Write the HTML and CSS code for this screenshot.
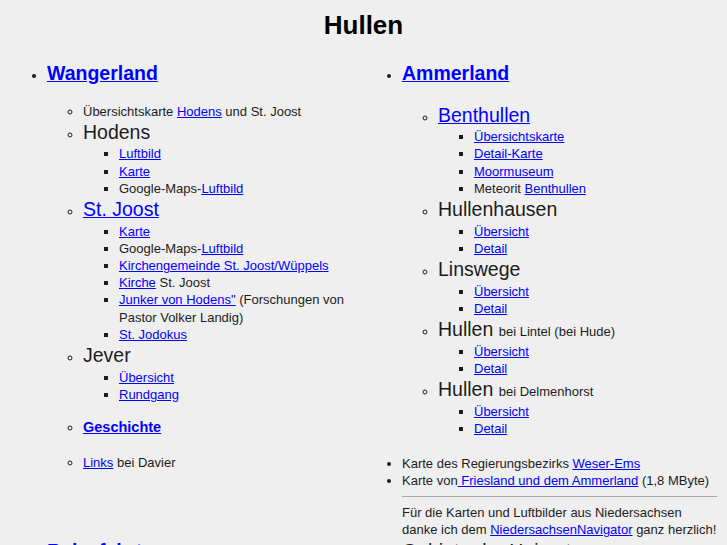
FILE: index.html
```html
<!DOCTYPE html>
<html lang="de">
<head>
<meta charset="utf-8">
<title>Hullen</title>
<link rel="stylesheet" href="styles.css">
</head>
<body>
<h1 class="title">Hullen</h1>
<div class="grid">
  <ul class="regions">
    <li class="region"><a class="region-link" href="#">Wangerland</a>
      <ul class="places">
        <li class="note">Übersichtskarte <a href="#">Hodens</a> und St. Joost</li>
        <li class="place">Hodens
          <ul class="links">
            <li><a href="#">Luftbild</a></li>
            <li><a href="#">Karte</a></li>
            <li>Google-Maps-<a href="#">Luftbild</a></li>
          </ul>
        </li>
        <li class="place"><a href="#">St. Joost</a>
          <ul class="links">
            <li><a href="#">Karte</a></li>
            <li>Google-Maps-<a href="#">Luftbild</a></li>
            <li><a href="#">Kirchengemeinde St. Joost/Wüppels</a></li>
            <li><a href="#">Kirche</a> St. Joost</li>
            <li><a href="#">Junker von Hodens"</a> (Forschungen von Pastor Volker Landig)</li>
            <li><a href="#">St. Jodokus</a></li>
          </ul>
        </li>
        <li class="place">Jever
          <ul class="links">
            <li><a href="#">Übersicht</a></li>
            <li><a href="#">Rundgang</a></li>
          </ul>
        </li>
        <li class="topic"><a class="topic-link" href="#">Geschichte</a></li>
        <li class="note note-links"><a href="#">Links</a> bei Davier</li>
      </ul>
    </li>
  </ul>

  <div class="column">
    <ul class="regions">
      <li class="region"><a class="region-link" href="#">Ammerland</a>
        <ul class="places">
          <li class="place"><a href="#">Benthullen</a>
            <ul class="links">
              <li><a href="#">Übersichtskarte</a></li>
              <li><a href="#">Detail-Karte</a></li>
              <li><a href="#">Moormuseum</a></li>
              <li>Meteorit <a href="#">Benthullen</a></li>
            </ul>
          </li>
          <li class="place">Hullenhausen
            <ul class="links">
              <li><a href="#">Übersicht</a></li>
              <li><a href="#">Detail</a></li>
            </ul>
          </li>
          <li class="place">Linswege
            <ul class="links">
              <li><a href="#">Übersicht</a></li>
              <li><a href="#">Detail</a></li>
            </ul>
          </li>
          <li class="place">Hullen <span class="place-sub">bei Lintel (bei Hude)</span>
            <ul class="links">
              <li><a href="#">Übersicht</a></li>
              <li><a href="#">Detail</a></li>
            </ul>
          </li>
          <li class="place">Hullen <span class="place-sub">bei Delmenhorst</span>
            <ul class="links">
              <li><a href="#">Übersicht</a></li>
              <li><a href="#">Detail</a></li>
            </ul>
          </li>
        </ul>
      </li>
    </ul>
    <ul class="maps">
      <li>Karte des Regierungsbezirks <a href="#">Weser-Ems</a></li>
      <li>Karte von<a href="#"> Friesland und dem Ammerland</a> (1,8 MByte)</li>
    </ul>
    <div class="credit">
      <hr class="rule">
      <p class="credit-text">Für die Karten und Luftbilder aus Niedersachsen<br>danke ich dem <a href="#">NiedersachsenNavigator</a> ganz herzlich!</p>
    </div>
  </div>

  <ul class="regions">
    <li class="region"><a class="region-link" href="#">Reisefahrten</a></li>
  </ul>
  <ul class="regions">
    <li class="place">Gebiete der Heimat</li>
  </ul>
</div>
</body>
</html>
```

FILE: styles.css
```css
html {
  background: #efefef;
}

body {
  margin: 8px;
  background: #efefef;
  color: #1c1c1c;
  font-family: "Liberation Sans", Arial, sans-serif;
  font-size: 13px;
  line-height: 17.2px;
}

a {
  color: #0000ff;
  text-decoration: underline;
}

li::marker {
  font-size: 13px;
  font-weight: normal;
  color: #1c1c1c;
}

.title {
  margin: 0;
  color: #000;
  font-size: 26px;
  line-height: 34px;
  font-weight: bold;
  text-align: center;
}

.grid {
  display: grid;
  grid-template-columns: 355px 351px;
  align-items: start;
  margin: 19px 0 0 3px;
}

.regions {
  margin: 0;
  padding-left: 36px;
  list-style: disc;
}

.region {
  font-size: 19.5px;
  line-height: 25.6px;
  font-weight: bold;
}

.region-link {
  color: #0000ff;
}

.places {
  margin: 16px 0 0;
  padding-left: 36px;
  list-style: circle;
  font-weight: normal;
  font-size: 13px;
  line-height: 17.2px;
}

.place {
  font-size: 19.5px;
  line-height: 25.6px;
  font-weight: normal;
}

.place-sub {
  font-size: 13px;
  line-height: 17px;
}

.links {
  margin: 0;
  padding-left: 36px;
  list-style: square;
  font-size: 13px;
  line-height: 17.2px;
}

.note {
  font-size: 13px;
  line-height: 17.2px;
}

.topic {
  margin: 14.6px 0 0;
  font-size: 14.5px;
  line-height: 19.6px;
}

.topic-link {
  font-weight: bold;
}

.note-links {
  margin-top: 16.6px;
}

.maps {
  margin: 17.8px 0 0;
  padding-left: 36px;
  list-style: disc;
}

.credit {
  padding-left: 36px;
}

.rule {
  height: 0;
  margin: 7px 0 7px;
  border: 0;
  border-top: 1px solid #a8a8a8;
}

.credit-text {
  margin: 0;
}
```
